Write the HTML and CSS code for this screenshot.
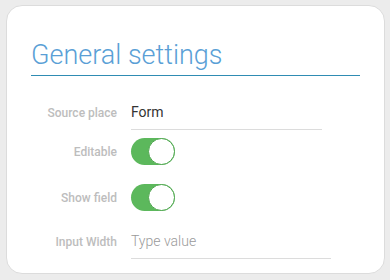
FILE: index.html
```html
<html>
  <head>
    <link rel="stylesheet" href="styles.css">
  </head>
  <body>
    <div class="card">
      <div class="heading">General settings</div>
      <div class="form">
        <div class="row row-source">
          <div class="label">Source place</div>
          <div class="field field-source">Form</div>
        </div>
        <div class="row row-editable">
          <div class="label">Editable</div>
          <div class="toggle"><span class="knob"></span></div>
        </div>
        <div class="row row-show">
          <div class="label">Show field</div>
          <div class="toggle"><span class="knob"></span></div>
        </div>
        <div class="row row-width">
          <div class="label">Input Width</div>
          <div class="field field-width placeholder">Type value</div>
        </div>
      </div>
    </div>
  </body>
</html>
```
FILE: styles.css
```css
body {
  margin: 0;
  background-color: #ececec;
  font-family: Roboto, 'Liberation Sans', sans-serif;
}
.card {
  box-sizing: border-box;
  margin: 5px 0 0 6px;
  width: 379px;
  height: 269px;
  background-color: white;
  border: 1px solid #dcdcdc;
  border-radius: 16px;
}
.heading {
  margin: 33px 0 0 24px;
  width: 329px;
  font-size: 27px;
  font-weight: 300;
  line-height: 32px;
  color: #5a9fd6;
  padding-bottom: 4px;
  border-bottom: 1px solid #2f8cb3;
}
.form {
  display: flex;
  flex-direction: column;
  margin-top: 20px;
}
.row {
  display: flex;
  align-items: center;
}
.label {
  width: 124px;
  padding-right: 14px;
  box-sizing: border-box;
  text-align: right;
  font-size: 12px;
  font-weight: 500;
  color: #bdbdbd;
}
.field {
  box-sizing: border-box;
  height: 34px;
  line-height: 33px;
  font-size: 14px;
  color: #333;
  border-bottom: 1px solid #dcdcdc;
}
.field-source {
  width: 191px;
}
.field-width {
  width: 200px;
}
.placeholder {
  color: #9a9a9a;
  font-weight: 300;
}
.row-editable {
  margin-top: 8px;
}
.row-show {
  margin-top: 19px;
}
.row-width {
  margin-top: 14px;
}
.toggle {
  box-sizing: border-box;
  display: flex;
  justify-content: flex-end;
  width: 44px;
  height: 27px;
  border-radius: 14px;
  background-color: #5cb85c;
}
.knob {
  box-sizing: border-box;
  width: 27px;
  height: 27px;
  border-radius: 50%;
  background-color: white;
  border: 1px solid #4ea64e;
}
```
